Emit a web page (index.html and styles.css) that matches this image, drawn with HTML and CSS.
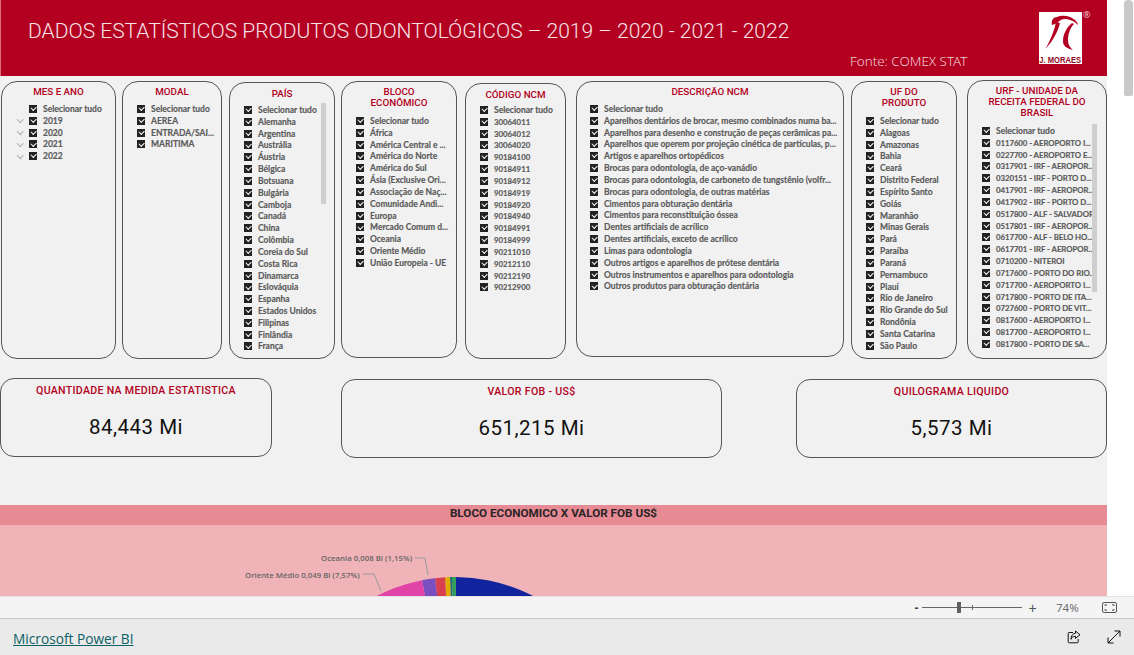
FILE: index.html
```html
<!DOCTYPE html>
<html lang="pt">
<head>
<meta charset="utf-8">
<title>Dados estatísticos</title>
<link rel="stylesheet" href="styles.css">
</head>
<body>
<div class="app">
  <div class="viewport">
    <main class="report">
      <header class="banner">
        <h1 class="banner-title">DADOS ESTATÍSTICOS PRODUTOS ODONTOLÓGICOS – 2019 – 2020 - 2021 - 2022</h1>
        <p class="banner-source">Fonte: COMEX STAT</p>
        <div class="logo">
          <svg class="logo-mark" viewBox="0 0 43 43" aria-hidden="true">
            <path d="M13 13C12 9 14 5 18 5c5-2.500 13-1.500 18 3 2 2 3 3.500 3 5-3-3.500-7-5.500-12-6-3-.3-5 .5-6.500 2-1.500 1.500-4 3-7.500 4z" fill="#b30021"/>
            <path d="M17 10c-1.500 7-4 15-10.500 27 7-8 12-16 14.500-26z" fill="#b30021"/>
            <path d="M33 11c-5 4-9 11-9 18 0 5 3 7 10 9-3-3-5-5-5-10 0-6 2-12 6-16z" fill="#b30021"/>
          </svg>
          <span class="logo-name">J. MORAES</span>
        </div>
        <span class="logo-reg">®</span>
      </header>

      <section class="filters">
        <div class="slicer s1">
          <h2 class="slicer-title">MES E ANO</h2>
          <ul class="slicer-list tree">
            <li class="row"><i class="box"></i>Selecionar tudo</li>
            <li class="row exp"><i class="box"></i>2019</li>
            <li class="row exp"><i class="box"></i>2020</li>
            <li class="row exp"><i class="box"></i>2021</li>
            <li class="row exp"><i class="box"></i>2022</li>
          </ul>
        </div>
        <div class="slicer s2">
          <h2 class="slicer-title">MODAL</h2>
          <ul class="slicer-list">
            <li class="row"><i class="box"></i>Selecionar tudo</li>
            <li class="row"><i class="box"></i>AEREA</li>
            <li class="row"><i class="box"></i>ENTRADA/SAI...</li>
            <li class="row"><i class="box"></i>MARITIMA</li>
          </ul>
        </div>
        <div class="slicer s3">
          <h2 class="slicer-title">PAÍS</h2>
          <ul class="slicer-list">
            <li class="row"><i class="box"></i>Selecionar tudo</li>
            <li class="row"><i class="box"></i>Alemanha</li>
            <li class="row"><i class="box"></i>Argentina</li>
            <li class="row"><i class="box"></i>Austrália</li>
            <li class="row"><i class="box"></i>Áustria</li>
            <li class="row"><i class="box"></i>Bélgica</li>
            <li class="row"><i class="box"></i>Botsuana</li>
            <li class="row"><i class="box"></i>Bulgária</li>
            <li class="row"><i class="box"></i>Camboja</li>
            <li class="row"><i class="box"></i>Canadá</li>
            <li class="row"><i class="box"></i>China</li>
            <li class="row"><i class="box"></i>Colômbia</li>
            <li class="row"><i class="box"></i>Coreia do Sul</li>
            <li class="row"><i class="box"></i>Costa Rica</li>
            <li class="row"><i class="box"></i>Dinamarca</li>
            <li class="row"><i class="box"></i>Eslováquia</li>
            <li class="row"><i class="box"></i>Espanha</li>
            <li class="row"><i class="box"></i>Estados Unidos</li>
            <li class="row"><i class="box"></i>Filipinas</li>
            <li class="row"><i class="box"></i>Finlândia</li>
            <li class="row"><i class="box"></i>França</li>
          </ul>
          <span class="thumb thumb-s3"></span>
        </div>
        <div class="slicer s4">
          <h2 class="slicer-title">BLOCO<br>ECONÔMICO</h2>
          <ul class="slicer-list">
            <li class="row"><i class="box"></i>Selecionar tudo</li>
            <li class="row"><i class="box"></i>África</li>
            <li class="row"><i class="box"></i>América Central e ...</li>
            <li class="row"><i class="box"></i>América do Norte</li>
            <li class="row"><i class="box"></i>América do Sul</li>
            <li class="row"><i class="box"></i>Ásia (Exclusive Ori...</li>
            <li class="row"><i class="box"></i>Associação de Naç...</li>
            <li class="row"><i class="box"></i>Comunidade Andi...</li>
            <li class="row"><i class="box"></i>Europa</li>
            <li class="row"><i class="box"></i>Mercado Comum d...</li>
            <li class="row"><i class="box"></i>Oceania</li>
            <li class="row"><i class="box"></i>Oriente Médio</li>
            <li class="row"><i class="box"></i>União Europeia - UE</li>
          </ul>
        </div>
        <div class="slicer s5">
          <h2 class="slicer-title">CÓDIGO NCM</h2>
          <ul class="slicer-list">
            <li class="row"><i class="box"></i>Selecionar tudo</li>
            <li class="row"><i class="box"></i>30064011</li>
            <li class="row"><i class="box"></i>30064012</li>
            <li class="row"><i class="box"></i>30064020</li>
            <li class="row"><i class="box"></i>90184100</li>
            <li class="row"><i class="box"></i>90184911</li>
            <li class="row"><i class="box"></i>90184912</li>
            <li class="row"><i class="box"></i>90184919</li>
            <li class="row"><i class="box"></i>90184920</li>
            <li class="row"><i class="box"></i>90184940</li>
            <li class="row"><i class="box"></i>90184991</li>
            <li class="row"><i class="box"></i>90184999</li>
            <li class="row"><i class="box"></i>90211010</li>
            <li class="row"><i class="box"></i>90212110</li>
            <li class="row"><i class="box"></i>90212190</li>
            <li class="row"><i class="box"></i>90212900</li>
          </ul>
        </div>
        <div class="slicer s6">
          <h2 class="slicer-title">DESCRIÇÃO NCM</h2>
          <ul class="slicer-list">
            <li class="row"><i class="box"></i>Selecionar tudo</li>
            <li class="row"><i class="box"></i>Aparelhos dentários de brocar, mesmo combinados numa ba...</li>
            <li class="row"><i class="box"></i>Aparelhos para desenho e construção de peças cerâmicas pa...</li>
            <li class="row"><i class="box"></i>Aparelhos que operem por projeção cinética de partículas, p...</li>
            <li class="row"><i class="box"></i>Artigos e aparelhos ortopédicos</li>
            <li class="row"><i class="box"></i>Brocas para odontologia, de aço-vanádio</li>
            <li class="row"><i class="box"></i>Brocas para odontologia, de carboneto de tungstênio (volfr...</li>
            <li class="row"><i class="box"></i>Brocas para odontologia, de outras matérias</li>
            <li class="row"><i class="box"></i>Cimentos para obturação dentária</li>
            <li class="row"><i class="box"></i>Cimentos para reconstituição óssea</li>
            <li class="row"><i class="box"></i>Dentes artificiais de acrílico</li>
            <li class="row"><i class="box"></i>Dentes artificiais, exceto de acrílico</li>
            <li class="row"><i class="box"></i>Limas para odontologia</li>
            <li class="row"><i class="box"></i>Outros artigos e aparelhos de prótese dentária</li>
            <li class="row"><i class="box"></i>Outros instrumentos e aparelhos para odontologia</li>
            <li class="row"><i class="box"></i>Outros produtos para obturação dentária</li>
          </ul>
        </div>
        <div class="slicer s7">
          <h2 class="slicer-title">UF DO<br>PRODUTO</h2>
          <ul class="slicer-list">
            <li class="row"><i class="box"></i>Selecionar tudo</li>
            <li class="row"><i class="box"></i>Alagoas</li>
            <li class="row"><i class="box"></i>Amazonas</li>
            <li class="row"><i class="box"></i>Bahia</li>
            <li class="row"><i class="box"></i>Ceará</li>
            <li class="row"><i class="box"></i>Distrito Federal</li>
            <li class="row"><i class="box"></i>Espírito Santo</li>
            <li class="row"><i class="box"></i>Goiás</li>
            <li class="row"><i class="box"></i>Maranhão</li>
            <li class="row"><i class="box"></i>Minas Gerais</li>
            <li class="row"><i class="box"></i>Pará</li>
            <li class="row"><i class="box"></i>Paraíba</li>
            <li class="row"><i class="box"></i>Paraná</li>
            <li class="row"><i class="box"></i>Pernambuco</li>
            <li class="row"><i class="box"></i>Piauí</li>
            <li class="row"><i class="box"></i>Rio de Janeiro</li>
            <li class="row"><i class="box"></i>Rio Grande do Sul</li>
            <li class="row"><i class="box"></i>Rondônia</li>
            <li class="row"><i class="box"></i>Santa Catarina</li>
            <li class="row"><i class="box"></i>São Paulo</li>
          </ul>
        </div>
        <div class="slicer s8">
          <h2 class="slicer-title">URF - UNIDADE DA<br>RECEITA FEDERAL DO<br>BRASIL</h2>
          <ul class="slicer-list">
            <li class="row"><i class="box"></i><span class="plain">Selecionar tudo</span></li>
            <li class="row"><i class="box"></i>0117600 - AEROPORTO I...</li>
            <li class="row"><i class="box"></i>0227700 - AEROPORTO E...</li>
            <li class="row"><i class="box"></i>0317901 - IRF - AEROPOR...</li>
            <li class="row"><i class="box"></i>0320151 - IRF - PORTO D...</li>
            <li class="row"><i class="box"></i>0417901 - IRF - AEROPOR...</li>
            <li class="row"><i class="box"></i>0417902 - IRF - PORTO D...</li>
            <li class="row"><i class="box"></i>0517800 - ALF - SALVADOR</li>
            <li class="row"><i class="box"></i>0517801 - IRF - AEROPOR...</li>
            <li class="row"><i class="box"></i>0617700 - ALF - BELO HO...</li>
            <li class="row"><i class="box"></i>0617701 - IRF - AEROPOR...</li>
            <li class="row"><i class="box"></i>0710200 - NITEROI</li>
            <li class="row"><i class="box"></i>0717600 - PORTO DO RIO...</li>
            <li class="row"><i class="box"></i>0717700 - AEROPORTO I...</li>
            <li class="row"><i class="box"></i>0717800 - PORTO DE ITA...</li>
            <li class="row"><i class="box"></i>0727600 - PORTO DE VIT...</li>
            <li class="row"><i class="box"></i>0817600 - AEROPORTO I...</li>
            <li class="row"><i class="box"></i>0817700 - AEROPORTO I...</li>
            <li class="row"><i class="box"></i>0817800 - PORTO DE SA...</li>
          </ul>
          <span class="thumb thumb-s8"></span>
        </div>
      </section>

      <section class="kpis">
        <div class="kpi k1">
          <h3 class="kpi-title">QUANTIDADE NA MEDIDA ESTATISTICA</h3>
          <p class="kpi-value">84,443 Mi</p>
        </div>
        <div class="kpi k2">
          <h3 class="kpi-title">VALOR FOB - US$</h3>
          <p class="kpi-value">651,215 Mi</p>
        </div>
        <div class="kpi k3">
          <h3 class="kpi-title">QUILOGRAMA LIQUIDO</h3>
          <p class="kpi-value">5,573 Mi</p>
        </div>
      </section>

      <section class="chart">
        <h3 class="chart-title">BLOCO ECONOMICO X VALOR FOB US$</h3>
        <div class="chart-body">
          <svg class="pie" viewBox="0 0 1107 71" aria-hidden="true">
            <path d="M455 222L456 52A170 170 0 0 1 625 222Z" fill="#12239e"/>
            <path d="M455 222L452 52A170 170 0 0 1 456 52Z" fill="#2f9e5a"/>
            <path d="M455 222L450 52A170 170 0 0 1 452 52Z" fill="#1a6f73"/>
            <path d="M455 222L445 52.3A170 170 0 0 1 450 52Z" fill="#e0ac00"/>
            <path d="M455 222L435 53.2A170 170 0 0 1 445 52.3Z" fill="#d9404f"/>
            <path d="M455 222L422 55.2A170 170 0 0 1 435 53.2Z" fill="#7a4fc0"/>
            <path d="M455 222L285 222A170 170 0 0 1 422 55.2Z" fill="#e044a7"/>
            <path class="leader" d="M415 33H425L428 50"/>
            <path class="leader" d="M363 49H374L381 66"/>
          </svg>
          <span class="pie-label l-oceania">Oceania 0,008 Bi (1,15%)</span>
          <span class="pie-label l-oriente">Oriente Médio 0,049 Bi (7,57%)</span>
        </div>
      </section>
    </main>
    <aside class="scrolltrack"><span class="scrollthumb"></span></aside>
  </div>

  <div class="zoombar">
    <span class="zoom-sign">-</span>
    <span class="zoom-slider"><i class="zoom-knob"></i><i class="zoom-tick"></i></span>
    <span class="zoom-sign plus">+</span>
    <span class="zoom-pct">74%</span>
    <svg class="zoom-fit" viewBox="0 0 15 11" aria-hidden="true">
      <rect x=".5" y=".5" width="14" height="10" rx="1.5"/>
      <path d="M3 4V2.8H5M10 2.8H12V4M12 7V8.2H10M5 8.2H3V7"/>
    </svg>
  </div>

  <footer class="footer">
    <a class="pbi-link" href="#">Microsoft Power BI</a>
    <div class="footer-icons">
      <svg class="ficon" viewBox="0 0 14 14" aria-hidden="true">
        <path d="M6 2.5H2.2a1 1 0 0 0-1 1v8.3a1 1 0 0 0 1 1h8a1 1 0 0 0 1-1V9"/>
        <path d="M8.5 1L13 4.8 8.5 8.4V6.3C6.3 6.3 4.8 7.3 4 9.3 4 6 5.600 3.500 8.500 3.200z"/>
      </svg>
      <svg class="ficon" viewBox="0 0 14 14" aria-hidden="true">
        <path d="M1 13L13 1M7.500 1H13V6.500M1 7.500V13H6.500"/>
      </svg>
    </div>
  </footer>
</div>
</body>
</html>
```
FILE: styles.css
```css
* { box-sizing: border-box; }
html, body { margin: 0; padding: 0; height: 100%; overflow: hidden; }
body { font-family: "Open Sans", "Liberation Sans", sans-serif; background: #fff; }
h1, h2, h3, p, ul { margin: 0; padding: 0; }
ul { list-style: none; }
i { font-style: normal; }

.app { width: 1134px; height: 655px; display: flex; flex-direction: column; overflow: hidden; }
.viewport { height: 596px; display: flex; overflow: hidden; flex: none; }
.report { width: 1107px; height: 596px; background: #f1f1f1; overflow: hidden; flex: none; }
.scrolltrack { flex: 1; background: #fff; padding-left: 17px; }
.scrollthumb { display: block; width: 9px; height: 96px; background: #c9c9c9; border-radius: 4px 4px 2px 2px; }

/* banner */
.banner { position: relative; height: 75.500px; background: #b30021; border-left: 1px solid #d8707f; color: #fff; }
.banner-title { font-family: Roboto, sans-serif; font-weight: 300; font-size: 21px; line-height: 30px; padding: 16px 0 0 27px; white-space: nowrap; color: #f6e3e6; }
.banner-source { font-family: "Noto Sans", sans-serif; font-weight: 300; font-size: 13.400px; line-height: 18px; position: absolute; left: 849px; top: 52px; color: #f0cfd5; white-space: nowrap; }
.logo { position: absolute; left: 1038px; top: 12px; width: 43px; height: 52px; background: #fff; overflow: hidden; display: flex; flex-direction: column; align-items: center; }
.logo-mark { width: 43px; height: 43px; display: block; flex: none; }
.logo-name { font-family: "Liberation Sans", sans-serif; font-weight: 700; font-size: 9.500px; line-height: 9px; color: #8f0a22; white-space: nowrap; transform: scaleX(.8); flex: none; }
.logo-reg { position: absolute; left: 1082px; top: 9px; font-size: 9px; line-height: 12px; color: #f0cfd5; }

/* slicers */
.filters { display: flex; align-items: flex-start; padding: 4.500px 0 0 1px; height: 302.500px; }
.slicer { position: relative; flex: none; border: 1px solid #555; border-radius: 16px; background: #f1f1f1; padding-top: 4px; overflow: hidden; }
.slicer-title { font-family: Roboto, sans-serif; font-weight: 500; font-size: 9.800px; line-height: 11px; color: #b30021; text-align: center; margin-bottom: 6px; }
.slicer-list { overflow: hidden; }
.row { display: flex; align-items: center; height: 11.830px; font-family: Lato, sans-serif; font-size: 8.500px; font-weight: 700; color: #5a5a5a; -webkit-text-stroke: .15px #5a5a5a; white-space: nowrap; }
.box { position: relative; flex: none; width: 8px; height: 8px; margin-right: 6px; background: #222; }
.box::after { content: ""; position: absolute; left: 2px; top: 1.200px; width: 3.500px; height: 2.500px; border-left: 1px solid #fff; border-bottom: 1px solid #fff; transform: rotate(-45deg); }

.s1 { width: 115px; height: 278px; margin-top: 1px; }
.s2 { width: 100px; height: 278px; margin: 1px 0 0 6px; }
.s3 { width: 106px; height: 277px; margin: 2px 0 0 7px; }
.s4 { width: 116px; height: 277px; margin: 1px 0 0 6px; }
.s5 { width: 101px; height: 276px; margin: 3px 0 0 8px; }
.s6 { width: 268px; height: 276px; margin: 1px 0 0 10px; }
.s7 { width: 106px; height: 278px; margin: 1px 0 0 7px; }
.s8 { width: 140px; height: 279px; margin: 0 0 0 10px; }

.s1 .slicer-list { padding-left: 27px; }
.s2 .slicer-list, .s3 .slicer-list, .s4 .slicer-list, .s5 .slicer-list, .s7 .slicer-list { padding-left: 14px; }
.s6 .slicer-list { padding-left: 13px; }
.s8 .slicer-list { padding-left: 14px; height: 227px; margin-top: 7px; }
.s3 .slicer-title { margin-top: 1px; margin-bottom: 5px; }
.s5 .slicer-title { margin-top: 1px; margin-bottom: 4px; }
.s3 .slicer-list { height: 247px; }
.s4 .slicer-title, .s7 .slicer-title { margin-bottom: 7px; }
.s8 .slicer-title { margin-bottom: 0; }
.s5 .row, .s8 .row { font-size: 7.800px; }
.s8 .row { letter-spacing: -.05px; }
.plain { font-size: 8.500px; letter-spacing: 0; }
.s5 .row:first-child { font-size: 8.500px; }
.exp { position: relative; }
.exp::before { content: ""; position: absolute; left: -11px; top: 2.500px; width: 3.500px; height: 3.500px; border-right: 1px solid #a9a9a9; border-bottom: 1px solid #a9a9a9; transform: rotate(45deg); }
.thumb { position: absolute; width: 5px; background: #cfcfcf; }
.thumb-s3 { left: 91px; top: 20px; height: 101px; }
.thumb-s8 { left: 124px; top: 43px; height: 168px; }

/* KPI cards */
.kpis { display: flex; align-items: flex-start; height: 127px; }
.kpi { flex: none; height: 79px; border: 1px solid #555; border-radius: 14px; text-align: center; padding-top: 5px; }
.k1 { width: 272px; }
.k2 { width: 381px; margin: 1px 0 0 69px; }
.k3 { width: 311px; margin: 1px 0 0 74px; }
.kpi-title { font-family: Roboto, sans-serif; font-weight: 500; font-size: 10.600px; line-height: 14px; color: #b30021; letter-spacing: .3px; }
.kpi-value { font-family: Roboto, sans-serif; font-weight: 400; font-size: 20.500px; line-height: 26px; margin-top: 16px; color: #111; letter-spacing: .5px; }

/* chart */
.chart { height: 91px; }
.chart-title { height: 20px; background: #e68b94; font-family: Roboto, sans-serif; font-weight: 700; font-size: 11.700px; line-height: 16px; text-align: center; color: #2a2426; }
.chart-body { position: relative; height: 71px; background: #f0b3b8; overflow: hidden; }
.pie { display: block; width: 1107px; height: 71px; }
.leader { fill: none; stroke: #999; stroke-width: 1; }
.pie-label { position: absolute; font-size: 7.800px; font-weight: 600; line-height: 10px; color: #666; white-space: nowrap; }
.l-oceania { left: 321px; top: 28px; }
.l-oriente { left: 245px; top: 45px; }

/* zoom bar */
.zoombar { height: 23px; background: #f4f4f4; border-top: 1px solid #e3e3e3; border-bottom: 1px solid #c8c8c8; display: flex; align-items: center; flex: none; padding-left: 911px; color: #555; }
.zoom-sign { width: 11px; font-family: "Liberation Sans", sans-serif; font-weight: 700; font-size: 12px; line-height: 12px; text-align: center; color: #444; }
.zoom-slider { position: relative; display: block; width: 100px; height: 1px; background: #666; }
.zoom-knob { position: absolute; left: 35px; top: -5px; width: 4px; height: 11px; background: #606060; }
.zoom-tick { position: absolute; left: 50px; top: -2px; width: 1px; height: 5px; background: #666; }
.plus { margin-left: 5px; font-weight: 400; font-size: 14px; color: #4a5560; }
.zoom-pct { margin-left: 18px; font-size: 11.500px; line-height: 14px; color: #666; width: 24px; }
.zoom-fit { width: 15px; height: 11px; margin-left: 22px; fill: none; stroke: #555; stroke-width: 1; }

/* footer */
.footer { flex: 1; background: #eaeaea; display: flex; align-items: center; justify-content: space-between; padding: 4px 13px 0 13px; }
.pbi-link { font-size: 13.700px; color: #0b5f66; text-decoration: underline; line-height: 18px; }
.footer-icons { display: flex; gap: 26px; margin-top: -4px; }
.ficon { width: 14px; height: 14px; fill: none; stroke: #111; stroke-width: 1; display: block; }
```
